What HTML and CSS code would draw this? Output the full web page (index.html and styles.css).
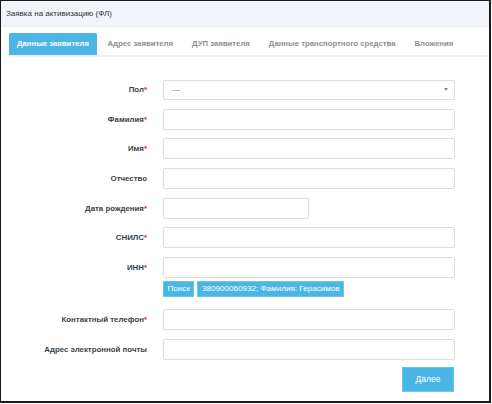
FILE: index.html
```html
<!DOCTYPE html>
<html lang="ru">
<head>
<meta charset="utf-8">
<title>Заявка на активизацию (ФЛ)</title>
<link rel="stylesheet" href="styles.css">
</head>
<body>
<div class="frame">
  <div class="header">Заявка на активизацию (ФЛ)</div>
  <div class="tabs">
    <div class="tab active">Данные заявителя</div>
    <div class="tab">Адрес заявителя</div>
    <div class="tab">ДУП заявителя</div>
    <div class="tab">Данные транспортного средства</div>
    <div class="tab">Вложения</div>
  </div>
  <div class="form">
    <div class="row">
      <label class="label">Пол<span class="req">*</span></label>
      <div class="input select"><span class="placeholder">---</span><span class="caret"></span></div>
    </div>
    <div class="row">
      <label class="label">Фамилия<span class="req">*</span></label>
      <div class="input"></div>
    </div>
    <div class="row">
      <label class="label">Имя<span class="req">*</span></label>
      <div class="input"></div>
    </div>
    <div class="row">
      <label class="label">Отчество</label>
      <div class="input"></div>
    </div>
    <div class="row">
      <label class="label">Дата рождения<span class="req">*</span></label>
      <div class="input short"></div>
    </div>
    <div class="row">
      <label class="label">СНИЛС<span class="req">*</span></label>
      <div class="input"></div>
    </div>
    <div class="row">
      <label class="label">ИНН<span class="req">*</span></label>
      <div class="input"></div>
    </div>
    <div class="row-tools">
      <span class="chip">Поиск</span>
      <span class="chip">380900060932; Фамилия: Герасимов</span>
    </div>
    <div class="row">
      <label class="label">Контактный телефон<span class="req">*</span></label>
      <div class="input"></div>
    </div>
    <div class="row">
      <label class="label">Адрес электронной почты</label>
      <div class="input"></div>
    </div>
    <div class="actions">
      <span class="btn">Далее</span>
    </div>
  </div>
</div>
</body>
</html>
```
FILE: styles.css
```css
* { box-sizing: border-box; }
html, body { margin: 0; padding: 0; background: #fff; }
body { font-family: "Liberation Sans", Arial, sans-serif; color: #333; }

.frame {
  width: 491px;
  height: 403px;
  border: 1px solid #1a1a1a;
  border-right-width: 2px;
  border-bottom-width: 2px;
  background: #fff;
}

.header {
  height: 26px;
  background: #f1f4f9;
  border-bottom: 1px solid #e6e9ee;
  font-size: 8px;
  line-height: 25px;
  padding-left: 5px;
  color: #333;
}

.tabs {
  display: flex;
  align-items: stretch;
  margin: 6px 0 0 8px;
  height: 24px;
  border-bottom: 2px solid #eef0f2;
}
.tab {
  font-size: 7.75px;
  font-weight: bold;
  color: #8a8f96;
  line-height: 22px;
  padding: 0 9.5px;
  white-space: nowrap;
  flex-shrink: 0;
}
.tab.active {
  background: #4bb6e5;
  color: #fff;
  border-radius: 2px 2px 0 0;
  padding: 0 8px;
  margin-right: 1px;
}

.form {
  padding-top: 22px;
  display: flex;
  flex-direction: column;
}
.row {
  display: flex;
  align-items: center;
  height: 21px;
  margin-bottom: 8.7px;
}
.label {
  width: 146px;
  text-align: right;
  font-size: 7.85px;
  font-weight: bold;
  color: #3a3f45;
  margin-right: 16px;
  flex-shrink: 0;
  white-space: nowrap;
}
.req { color: #d9262c; }
.input {
  width: 292px;
  height: 21px;
  border: 1px solid #dcdcdc;
  border-radius: 2px;
  background: #fff;
}
.input.short { width: 146px; }
.select {
  display: flex;
  align-items: center;
  justify-content: space-between;
  padding: 0 6px 0 8px;
  height: 20px;
}
.placeholder { font-size: 8px; color: #777; }
.caret {
  width: 0; height: 0;
  border-left: 2.5px solid transparent;
  border-right: 2.5px solid transparent;
  border-top: 3px solid #888;
}

.row-tools {
  display: flex;
  gap: 3px;
  margin: -6px 0 12px 162px;
  height: 16px;
}
.chip {
  background: #4bb6e5;
  color: #fff;
  font-size: 8.1px;
  line-height: 14px;
  padding: 0 3.5px;
  border: 1px solid #6cc5ec;
  white-space: nowrap;
}

.actions {
  display: flex;
  justify-content: flex-end;
  padding-right: 35px;
  margin-top: -1px;
}
.btn {
  width: 52px;
  height: 25px;
  background: #4bb6e5;
  color: #fff;
  font-size: 8.5px;
  line-height: 23px;
  text-align: center;
  border: 1px solid #6cc5ec;
}
```
